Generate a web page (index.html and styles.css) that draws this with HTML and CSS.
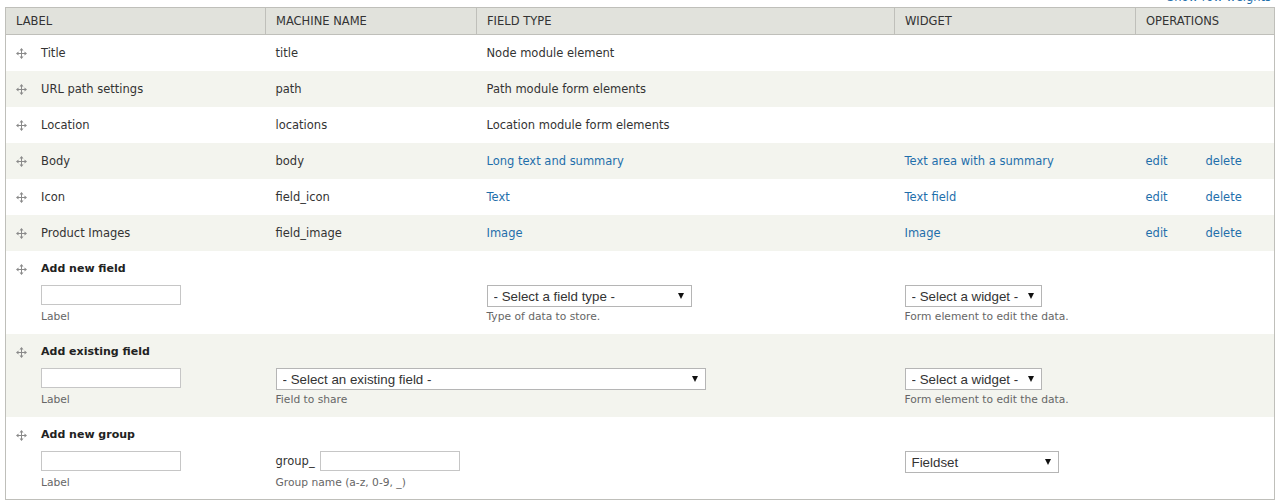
FILE: index.html
```html
<!DOCTYPE html>
<html>
<head>
<meta charset="utf-8">
<title>Manage fields</title>
<link rel="stylesheet" href="styles.css">
</head>
<body>
<div class="page">
  <div class="weights"><a class="weights-link" href="#">Show row weights</a></div>
  <table class="fields">
    <colgroup>
      <col class="c-label"><col class="c-machine"><col class="c-type"><col class="c-widget"><col class="c-edit"><col class="c-delete">
    </colgroup>
    <thead>
      <tr>
        <th>Label</th>
        <th>Machine name</th>
        <th>Field type</th>
        <th>Widget</th>
        <th colspan="2">Operations</th>
      </tr>
    </thead>
    <tbody>
      <tr class="odd">
        <td><div class="lbl"><span class="handle"><svg width="11" height="11" viewBox="0 0 11 11"><path d="M5 2h1v7H5zM2 5h7v1H2z" fill="#8a8a8a"/><path d="M5.5 0L7.5 2.5h-4zM5.5 11L3.5 8.5h4zM0 5.5L2.5 3.5v4zM11 5.5L8.5 7.5v-4z" fill="#8a8a8a"/></svg></span><span>Title</span></div></td>
        <td>title</td>
        <td>Node module element</td>
        <td></td><td></td><td></td>
      </tr>
      <tr class="even">
        <td><div class="lbl"><span class="handle"><svg width="11" height="11" viewBox="0 0 11 11"><path d="M5 2h1v7H5zM2 5h7v1H2z" fill="#8a8a8a"/><path d="M5.5 0L7.5 2.5h-4zM5.5 11L3.5 8.5h4zM0 5.5L2.5 3.5v4zM11 5.5L8.5 7.5v-4z" fill="#8a8a8a"/></svg></span><span>URL path settings</span></div></td>
        <td>path</td>
        <td>Path module form elements</td>
        <td></td><td></td><td></td>
      </tr>
      <tr class="odd">
        <td><div class="lbl"><span class="handle"><svg width="11" height="11" viewBox="0 0 11 11"><path d="M5 2h1v7H5zM2 5h7v1H2z" fill="#8a8a8a"/><path d="M5.5 0L7.5 2.5h-4zM5.5 11L3.5 8.5h4zM0 5.5L2.5 3.5v4zM11 5.5L8.5 7.5v-4z" fill="#8a8a8a"/></svg></span><span>Location</span></div></td>
        <td>locations</td>
        <td>Location module form elements</td>
        <td></td><td></td><td></td>
      </tr>
      <tr class="even">
        <td><div class="lbl"><span class="handle"><svg width="11" height="11" viewBox="0 0 11 11"><path d="M5 2h1v7H5zM2 5h7v1H2z" fill="#8a8a8a"/><path d="M5.5 0L7.5 2.5h-4zM5.5 11L3.5 8.5h4zM0 5.5L2.5 3.5v4zM11 5.5L8.5 7.5v-4z" fill="#8a8a8a"/></svg></span><span>Body</span></div></td>
        <td>body</td>
        <td><a href="#">Long text and summary</a></td>
        <td><a href="#">Text area with a summary</a></td>
        <td><a href="#">edit</a></td>
        <td><a href="#">delete</a></td>
      </tr>
      <tr class="odd">
        <td><div class="lbl"><span class="handle"><svg width="11" height="11" viewBox="0 0 11 11"><path d="M5 2h1v7H5zM2 5h7v1H2z" fill="#8a8a8a"/><path d="M5.5 0L7.5 2.5h-4zM5.5 11L3.5 8.5h4zM0 5.5L2.5 3.5v4zM11 5.5L8.5 7.5v-4z" fill="#8a8a8a"/></svg></span><span>Icon</span></div></td>
        <td>field_icon</td>
        <td><a href="#">Text</a></td>
        <td><a href="#">Text field</a></td>
        <td><a href="#">edit</a></td>
        <td><a href="#">delete</a></td>
      </tr>
      <tr class="even">
        <td><div class="lbl"><span class="handle"><svg width="11" height="11" viewBox="0 0 11 11"><path d="M5 2h1v7H5zM2 5h7v1H2z" fill="#8a8a8a"/><path d="M5.5 0L7.5 2.5h-4zM5.5 11L3.5 8.5h4zM0 5.5L2.5 3.5v4zM11 5.5L8.5 7.5v-4z" fill="#8a8a8a"/></svg></span><span>Product Images</span></div></td>
        <td>field_image</td>
        <td><a href="#">Image</a></td>
        <td><a href="#">Image</a></td>
        <td><a href="#">edit</a></td>
        <td><a href="#">delete</a></td>
      </tr>
      <tr class="odd add">
        <td>
          <div class="lbl top"><span class="handle"><svg width="11" height="11" viewBox="0 0 11 11"><path d="M5 2h1v7H5zM2 5h7v1H2z" fill="#8a8a8a"/><path d="M5.5 0L7.5 2.5h-4zM5.5 11L3.5 8.5h4zM0 5.5L2.5 3.5v4zM11 5.5L8.5 7.5v-4z" fill="#8a8a8a"/></svg></span>
            <div class="addbox">
              <div class="add-title">Add new field</div>
              <div class="ctl"><input class="text" type="text"></div>
              <div class="desc">Label</div>
            </div>
          </div>
        </td>
        <td></td>
        <td>
          <div class="placeholder"></div>
          <div class="ctl"><span class="select"><select class="w-type"><option>- Select a field type -</option></select></span></div>
          <div class="desc">Type of data to store.</div>
        </td>
        <td colspan="3">
          <div class="placeholder"></div>
          <div class="ctl"><span class="select"><select class="w-widget"><option>- Select a widget -</option></select></span></div>
          <div class="desc">Form element to edit the data.</div>
        </td>
      </tr>
      <tr class="even add">
        <td>
          <div class="lbl top"><span class="handle"><svg width="11" height="11" viewBox="0 0 11 11"><path d="M5 2h1v7H5zM2 5h7v1H2z" fill="#8a8a8a"/><path d="M5.5 0L7.5 2.5h-4zM5.5 11L3.5 8.5h4zM0 5.5L2.5 3.5v4zM11 5.5L8.5 7.5v-4z" fill="#8a8a8a"/></svg></span>
            <div class="addbox">
              <div class="add-title">Add existing field</div>
              <div class="ctl"><input class="text" type="text"></div>
              <div class="desc">Label</div>
            </div>
          </div>
        </td>
        <td colspan="2">
          <div class="placeholder"></div>
          <div class="ctl"><span class="select"><select class="w-existing"><option>- Select an existing field -</option></select></span></div>
          <div class="desc">Field to share</div>
        </td>
        <td colspan="3">
          <div class="placeholder"></div>
          <div class="ctl"><span class="select"><select class="w-widget"><option>- Select a widget -</option></select></span></div>
          <div class="desc">Form element to edit the data.</div>
        </td>
      </tr>
      <tr class="odd add last">
        <td>
          <div class="lbl top"><span class="handle"><svg width="11" height="11" viewBox="0 0 11 11"><path d="M5 2h1v7H5zM2 5h7v1H2z" fill="#8a8a8a"/><path d="M5.5 0L7.5 2.5h-4zM5.5 11L3.5 8.5h4zM0 5.5L2.5 3.5v4zM11 5.5L8.5 7.5v-4z" fill="#8a8a8a"/></svg></span>
            <div class="addbox">
              <div class="add-title">Add new group</div>
              <div class="ctl"><input class="text" type="text"></div>
              <div class="desc">Label</div>
            </div>
          </div>
        </td>
        <td>
          <div class="placeholder"></div>
          <div class="ctl inline"><span class="prefix">group_</span><input class="text" type="text"></div>
          <div class="desc">Group name (a-z, 0-9, _)</div>
        </td>
        <td></td>
        <td colspan="3">
          <div class="placeholder"></div>
          <div class="ctl"><span class="select"><select class="w-fieldset"><option>Fieldset</option></select></span></div>
        </td>
      </tr>
    </tbody>
  </table>
</div>
</body>
</html>
```

FILE: styles.css
```css
html, body {
  margin: 0;
  padding: 0;
  background: #fff;
}

body {
  font-family: "DejaVu Sans", Verdana, sans-serif;
  font-size: 11.5px;
  color: #333;
}

a {
  color: #1f6fab;
  text-decoration: none;
}

.page {
  padding: 0 6px 0 5px;
}

.weights {
  height: 7px;
  text-align: right;
  padding-right: 2px;
}

.weights-link {
  display: inline-block;
  line-height: 14px;
  margin-top: -10px;
  vertical-align: top;
}

.fields {
  width: 1269px;
  border-collapse: collapse;
  table-layout: fixed;
  border: 1px solid #bfbfba;
}

.c-label { width: 260px; }
.c-machine { width: 211px; }
.c-type { width: 418px; }
.c-widget { width: 241px; }
.c-edit { width: 60px; }
.c-delete { width: 79px; }

.fields th {
  background: #e1e2dc;
  height: 26px;
  padding: 0 10px;
  text-align: left;
  font-weight: normal;
  text-transform: uppercase;
  border-right: 1px solid #bfbfba;
  border-bottom: 1px solid #bfbfba;
  color: #333;
}

.fields td {
  height: 36px;
  padding: 0 10px;
  vertical-align: middle;
  white-space: nowrap;
}

.fields tr.even td {
  background: #f3f4ee;
}

.lbl {
  display: flex;
  align-items: center;
}

.lbl.top {
  align-items: flex-start;
}

.handle {
  width: 11px;
  height: 16px;
  flex: 0 0 11px;
  margin-right: 14px;
  display: flex;
  align-items: center;
}

.handle svg {
  display: block;
}

.fields tr.add td {
  height: auto;
  vertical-align: top;
  padding: 10px 10px 10px;
}

.fields tr.add.last td {
  padding-bottom: 9px;
}

.add-title {
  height: 16px;
  line-height: 16px;
  font-weight: bold;
  font-size: 11px;
  color: #222;
  margin-bottom: 8px;
}

.placeholder {
  height: 16px;
  margin-bottom: 8px;
}

.ctl {
  height: 22px;
}

.ctl.inline {
  display: flex;
  align-items: flex-start;
}

.prefix {
  line-height: 20px;
  margin-right: 5px;
}

.desc {
  margin-top: 3px;
  line-height: 14px;
  font-size: 10.7px;
  color: #666;
}

.text {
  display: block;
  box-sizing: border-box;
  width: 140px;
  height: 20px;
  margin: 0;
  padding: 0 4px;
  border: 1px solid #c6c6c6;
  background: #fff;
  font-family: "Liberation Sans", Arial, sans-serif;
  font-size: 13px;
}

.select {
  position: relative;
  display: inline-block;
  vertical-align: top;
}

.select select {
  -webkit-appearance: none;
  appearance: none;
  display: block;
  box-sizing: border-box;
  height: 22px;
  margin: 0;
  padding: 0 20px 0 6px;
  border: 1px solid #b5b5b5;
  border-radius: 0;
  background: #fff;
  font-family: "Liberation Sans", Arial, sans-serif;
  font-size: 13.33px;
  color: #333;
}

.select::after {
  content: "";
  position: absolute;
  right: 8px;
  top: 8px;
  border-left: 3px solid transparent;
  border-right: 3px solid transparent;
  border-top: 6px solid #111;
  pointer-events: none;
}

.w-type { width: 205px; }
.w-widget { width: 137px; }
.w-existing { width: 430px; }
.w-fieldset { width: 154px; }
```
